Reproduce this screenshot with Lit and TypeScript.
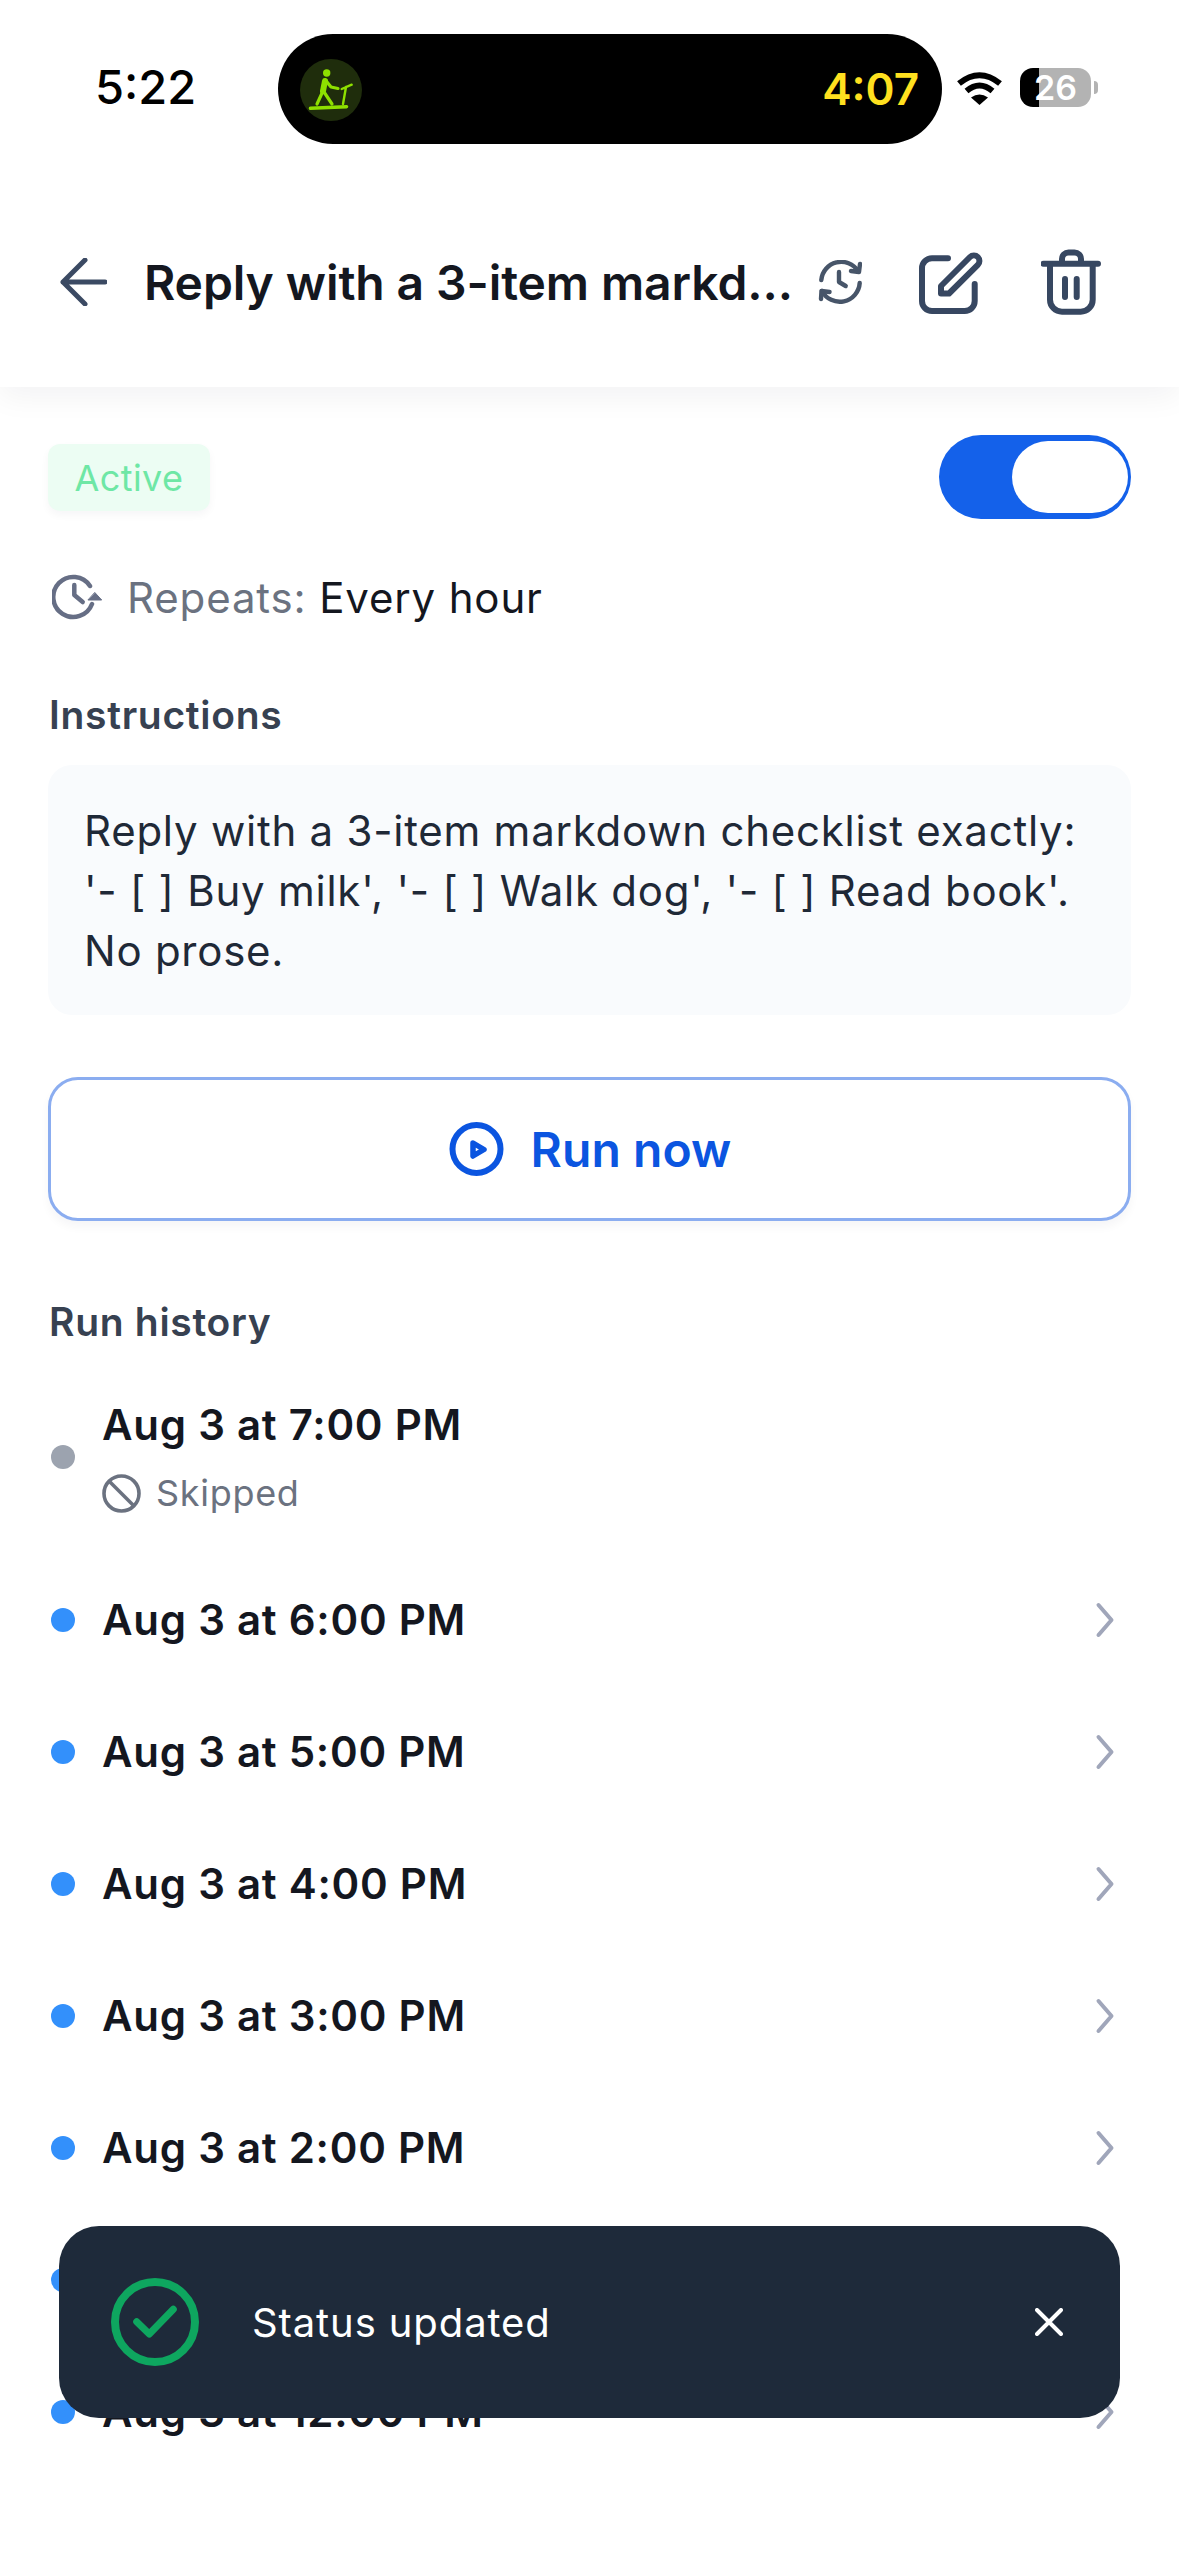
import { LitElement, html, css, svg } from 'lit';
import { customElement } from 'lit/decorators.js';

const runs = ['Aug 3 at 6:00 PM', 'Aug 3 at 5:00 PM', 'Aug 3 at 4:00 PM', 'Aug 3 at 3:00 PM', 'Aug 3 at 2:00 PM', 'Aug 3 at 1:00 PM', 'Aug 3 at 12:00 PM'];

const chevron = svg`<path d="M3.5 3l13 15-13 15" fill="none" stroke="currentColor" stroke-width="4" stroke-linecap="round" stroke-linejoin="round"/>`;

@customElement('app-root')
export default class App extends LitElement {
  static override styles = css`
    :host {
      display: block;
      font-family: Inter, 'Noto Sans', sans-serif;
    }
    svg {
      display: block;
      flex: none;
    }
    .app {
      position: relative;
      height: 2556px;
      overflow: hidden;
      background: #fff;
    }
    .status {
      display: flex;
      height: 143px;
      padding: 34px 0 0 95px;
      box-sizing: content-box;
    }
    .status__time {
      width: 183px;
      font-size: 47px;
      font-weight: 500;
      line-height: 106px;
      color: #000;
    }
    .island {
      display: flex;
      align-items: center;
      justify-content: space-between;
      box-sizing: border-box;
      width: 664px;
      height: 110px;
      padding: 0 23px 0 22px;
      border-radius: 55px;
      background: #000;
    }
    .island__timer {
      font-size: 44px;
      font-weight: 600;
      color: #ffe01f;
    }
    .island__badge {
      width: 62px;
      height: 62px;
      border-radius: 50%;
      background: #1f2d0c;
      margin-top: 2px;
    }
    .status__wifi {
      margin: 36px 0 0 14px;
    }
    .battery {
      position: relative;
      display: flex;
      align-items: center;
      justify-content: center;
      overflow: hidden;
      width: 71px;
      height: 39px;
      margin: 34px 0 0 17px;
      border-radius: 13px;
      background: linear-gradient(90deg, #000 27%, #b3b3b3 27%);
      color: #fff;
      font-size: 34px;
      font-weight: 600;
    }
    .nub {
      width: 4px;
      height: 13px;
      margin: 47px 0 0 3px;
      border-radius: 0 4px 4px 0;
      background: #b3b3b3;
    }
    .header {
      position: relative;
      display: flex;
      align-items: center;
      height: 210px;
      padding: 0 78px 0 60px;
      background: #fff;
      box-shadow: 0 10px 28px rgba(15, 23, 42, 0.05);
      clip-path: inset(0 0 -50px 0);
    }
    .header__title {
      flex: 1;
      margin-left: 37px;
      font-size: 48px;
      font-weight: 600;
      letter-spacing: -0.1px;
      color: #14171f;
      white-space: nowrap;
    }
    .header__history {
      margin-right: 56px;
    }
    .header__edit {
      margin-right: 57px;
    }
    .content {
      padding: 48px 48px 0;
    }
    .top {
      display: flex;
      align-items: center;
      justify-content: space-between;
    }
    .badge {
      box-sizing: border-box;
      width: 162px;
      height: 67px;
      border-radius: 12px;
      background: #ecfdf3;
      box-shadow: 0 4px 8px rgba(15, 23, 42, 0.04);
      color: #6ee7a5;
      font-size: 36px;
      letter-spacing: 0.4px;
      line-height: 69px;
      text-align: center;
    }
    .toggle {
      box-sizing: border-box;
      display: flex;
      justify-content: flex-end;
      width: 192px;
      height: 84px;
      padding: 6px 3px;
      border-radius: 42px;
      background: #1461ea;
    }
    .toggle__knob {
      width: 116px;
      height: 72px;
      border-radius: 36px;
      background: #fff;
    }
    .repeat {
      display: flex;
      align-items: center;
      gap: 25px;
      height: 50px;
      margin-top: 53px;
      padding-left: 4px;
      font-size: 42px;
      letter-spacing: 0.85px;
      color: #14171f;
    }
    .repeat__label {
      color: #6b7280;
    }
    .label {
      padding-left: 1px;
      font-size: 39px;
      font-weight: 600;
      letter-spacing: 0.7px;
      line-height: 48px;
      color: #374151;
    }
    .label--instructions {
      margin-top: 69px;
    }
    .label--history {
      margin-top: 77px;
    }
    .prompt {
      margin-top: 26px;
      padding: 36px 36px 34px;
      border-radius: 24px;
      background: #f9fbfd;
      font-size: 42px;
      letter-spacing: 0.75px;
      line-height: 60px;
      color: #1f2937;
    }
    .run {
      display: flex;
      align-items: center;
      justify-content: center;
      gap: 26px;
      box-sizing: border-box;
      height: 144px;
      margin-top: 62px;
      border: 3px solid #8badf0;
      border-radius: 30px;
      box-shadow: 0 6px 10px rgba(15, 23, 42, 0.04);
      color: #0b55e0;
      font-size: 48px;
      font-weight: 600;
      letter-spacing: 0.1px;
    }
    .run svg {
      margin-left: 2px;
    }
    .list {
      margin-top: 13px;
    }
    .row {
      display: flex;
      align-items: center;
      height: 132px;
      padding-left: 3px;
    }
    .row--skipped {
      height: auto;
      padding-top: 39px;
      padding-bottom: 38px;
    }
    .dot {
      flex: none;
      width: 24px;
      height: 24px;
      margin-right: 27px;
      border-radius: 50%;
      background: #3390fb;
    }
    .dot--grey {
      background: #9ca3af;
    }
    .row__time {
      flex: 1;
      font-size: 42px;
      font-weight: 600;
      letter-spacing: 0.75px;
      line-height: 54px;
      color: #14171f;
    }
    .row__sub {
      display: flex;
      align-items: center;
      gap: 15px;
      margin-top: 18px;
      font-size: 36px;
      letter-spacing: 0.7px;
      line-height: 46px;
      color: #6b7280;
    }
    .row__chevron {
      margin-right: 16px;
      color: #a0a6ba;
    }
    .toast {
      position: absolute;
      top: 2226px;
      left: 59px;
      display: flex;
      align-items: center;
      box-sizing: border-box;
      width: 1061px;
      height: 192px;
      padding: 0 57px 0 52px;
      border-radius: 40px;
      background: #1e2a3a;
      color: #fff;
      font-size: 40px;
      letter-spacing: 0.9px;
    }
    .toast__text {
      flex: 1;
      margin-left: 53px;
    }
  `;

  override render() {
    return html`
      <div class="app">
        <div class="status">
          <div class="status__time">5:22</div>
          <div class="island">
            <div class="island__badge">
              <svg width="62" height="62" viewBox="0 0 62 62" fill="none" stroke="#8ee000" stroke-width="3.2" stroke-linecap="round" stroke-linejoin="round">
                <circle cx="26.7" cy="14" r="3.7" fill="#8ee000" stroke="none"/>
                <path d="M25 22l-2 10" stroke-width="6"/>
                <path d="M23 32l-6 13M24 33l8 12M27 23l4 5 7 1.5"/>
                <path d="M10.5 49.3l36-1.6" stroke-width="3.6"/>
                <path d="M43 45l3-17M41.7 30l10-4.3" stroke-width="2.4"/>
              </svg>
            </div>
            <div class="island__timer">4:07</div>
          </div>
          <svg class="status__wifi" width="47" height="35" viewBox="0 0 47 35">
            <path d="M3 13.5Q23.5-3 44 13.5M10.5 21Q23.5 10 36.5 21" fill="none" stroke="#000" stroke-width="6"/>
            <path d="M15 27.5Q23.5 21.5 32 27.5L23.5 35Z" fill="#000"/>
          </svg>
          <div class="battery">26</div>
          <div class="nub"></div>
        </div>
        <div class="header">
          <svg width="47" height="48" viewBox="0 0 47 48" fill="none" stroke="#3b4a63" stroke-width="5" stroke-linecap="round" stroke-linejoin="round">
            <path d="M45 24H3M25 2L3 24l22 22"/>
          </svg>
          <div class="header__title">Reply with a 3-item markd...</div>
          <svg class="header__history" width="44" height="44" viewBox="0 0 44 44" fill="none" stroke="#475569" stroke-width="4.4" stroke-linecap="round" stroke-linejoin="round">
            <path d="M3.3 20A20 20 0 0 1 40 11M41.7 23A20 20 0 0 1 4 31"/>
            <path d="M42 4l-1 8-8-1M3 39l.5-8 8 1"/>
            <path d="M21 12v10l6.7 4"/>
          </svg>
          <svg class="header__edit" width="66" height="66" viewBox="0 0 66 66" fill="none" stroke="#374761" stroke-width="6" stroke-linecap="round" stroke-linejoin="round">
            <path d="M30 9.3H14a10 10 0 0 0-10 10V52a10 10 0 0 0 10 10H46.7a10 10 0 0 0 10-10V35"/>
            <path d="M23 37L52 8a5.5 5.5 0 0 1 7.8 7.8L31 44.5H23Z"/>
          </svg>
          <svg width="60" height="66" viewBox="0 0 60 66" fill="none" stroke="#374761" stroke-width="6" stroke-linecap="round" stroke-linejoin="round">
            <path d="M2.5 14.7H57M21 14V10a6.5 6.5 0 0 1 6.5-6.5h6a6.5 6.5 0 0 1 6.5 6.5v4"/>
            <path d="M9 15V50.7a12 12 0 0 0 12 12H39.7a12 12 0 0 0 12-12V15"/>
            <path d="M24 30V48M35.7 30V48"/>
          </svg>
        </div>
        <div class="content">
          <div class="top">
            <div class="badge">Active</div>
            <div class="toggle"><div class="toggle__knob"></div></div>
          </div>
          <div class="repeat">
            <svg width="50" height="46" viewBox="0 0 50 46" fill="none" stroke="#666e85" stroke-width="4.5" stroke-linecap="round" stroke-linejoin="round">
              <path d="M38 12A20 20 0 1 0 40 30"/>
              <path d="M22.3 11v10l8.4 7"/>
              <path d="M36.3 26h13.4L43 18.7Z" fill="#666e85" stroke-width="1"/>
            </svg>
            <div><span class="repeat__label">Repeats:</span> Every hour</div>
          </div>
          <div class="label label--instructions">Instructions</div>
          <div class="prompt">Reply with a 3-item markdown checklist exactly: '- [ ] Buy milk', '- [ ] Walk dog', '- [ ] Read book'. No prose.</div>
          <div class="run">
            <svg width="55" height="54" viewBox="0 0 55 54" fill="none" stroke="currentColor" stroke-width="6" stroke-linejoin="round">
              <circle cx="27.5" cy="27" r="24"/>
              <path d="M24 21l11 6.5-11 6.5Z" stroke-width="5.5"/>
            </svg>
            <span>Run now</span>
          </div>
          <div class="label label--history">Run history</div>
          <div class="list">
            <div class="row row--skipped">
              <div class="dot dot--grey"></div>
              <div>
                <div class="row__time">Aug 3 at 7:00 PM</div>
                <div class="row__sub">
                  <svg width="39" height="39" viewBox="0 0 39 39" fill="none" stroke="#6b7280" stroke-width="3.6">
                    <circle cx="19.5" cy="19.5" r="17.5"/>
                    <path d="M7.5 7.5l24 24"/>
                  </svg>
                  Skipped
                </div>
              </div>
            </div>
            ${runs.map(
              (r) => html`
                <div class="row">
                  <div class="dot"></div>
                  <div class="row__time">${r}</div>
                  <svg class="row__chevron" width="20" height="36" viewBox="0 0 20 36">${chevron}</svg>
                </div>
              `,
            )}
          </div>
        </div>
        <div class="toast">
          <svg width="88" height="88" viewBox="0 0 88 88" fill="none" stroke="#0ea65f" stroke-width="8" stroke-linecap="round" stroke-linejoin="round">
            <circle cx="44" cy="44" r="40"/>
            <path d="M25.7 43.7L38.3 56 62.3 31.3" stroke-width="7"/>
          </svg>
          <div class="toast__text">Status updated</div>
          <svg width="28" height="28" viewBox="0 0 28 28" fill="none" stroke="#fff" stroke-width="4" stroke-linecap="round">
            <path d="M2 2l24 24M26 2L2 26"/>
          </svg>
        </div>
      </div>
    `;
  }
}
